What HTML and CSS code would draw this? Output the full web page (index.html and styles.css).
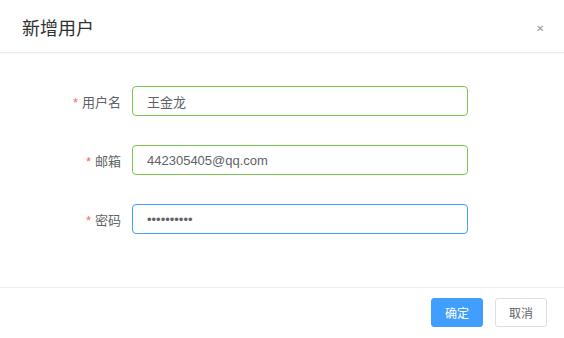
FILE: index.html
```html
<!DOCTYPE html>
<html lang="zh-CN">
<head>
    <meta charset="UTF-8">
    <meta name="viewport" content="width=device-width, initial-scale=1.0">
    <title>新增用户</title>
    <link rel="stylesheet" href="styles.css">
</head>
<body>
    <div class="dialog">
        <!-- En-tête -->
        <div class="dialog-header">
            <span class="dialog-title">新增用户</span>
            <span class="dialog-close">&#x2715;</span>
        </div>

        <!-- Formulaire -->
        <div class="dialog-body">
            <div class="form-row">
                <label class="form-label"><span class="req">*</span>用户名</label>
                <input class="form-input ok" type="text" value="王金龙">
            </div>
            <div class="form-row">
                <label class="form-label"><span class="req">*</span>邮箱</label>
                <input class="form-input ok" type="text" value="442305405@qq.com">
            </div>
            <div class="form-row">
                <label class="form-label"><span class="req">*</span>密码</label>
                <input class="form-input focus" type="password" value="1234567890">
            </div>
        </div>

        <!-- Boutons -->
        <div class="dialog-footer">
            <button class="btn btn-primary">确定</button>
            <button class="btn">取消</button>
        </div>
    </div>
</body>
</html>
```

FILE: styles.css
```css
body {
    margin: 0;
    padding: 0;
    background-color: #fff;
    font-family: "Liberation Sans", "Noto Sans CJK SC", sans-serif;
    color: #606266;
}
.dialog {
    width: 564px;
    height: 338px;
    background: #fff;
}
.dialog-header {
    height: 52px;
    padding: 0 22px;
    display: flex;
    align-items: center;
    justify-content: space-between;
    border-bottom: 1px solid #ebeef5;
    box-shadow: 0 1px 2px rgba(0, 0, 0, 0.03);
}
.dialog-title {
    font-size: 18px;
    color: #303133;
    margin-top: 2px;
}
.dialog-close {
    font-size: 10px;
    color: #909399;
    margin-right: -2px;
    margin-top: 4px;
}
.dialog-body {
    padding: 33px 0 53px;
    display: flex;
    flex-direction: column;
    gap: 29px;
    border-bottom: 1px solid #ebeef5;
}
.form-row {
    display: flex;
    align-items: center;
    height: 30px;
}
.form-label {
    width: 132px;
    padding-right: 11px;
    box-sizing: border-box;
    text-align: right;
    font-size: 13px;
    color: #606266;
}
.req {
    color: #f56c6c;
    margin-right: 4px;
}
.form-input {
    width: 336px;
    height: 30px;
    box-sizing: border-box;
    padding: 0 14px;
    border: 1px solid #dcdfe6;
    border-radius: 4px;
    font-family: "Liberation Sans", "Noto Sans CJK SC", sans-serif;
    font-size: 13px;
    color: #606266;
    outline: none;
}
.form-input.ok {
    border-color: #7ac74f;
}
.form-input.focus {
    border-color: #409eff;
}
.dialog-footer {
    display: flex;
    justify-content: flex-end;
    gap: 12px;
    padding: 10px 17px 0;
}
.btn {
    width: 52px;
    height: 29px;
    border: 1px solid #dcdfe6;
    border-radius: 3px;
    background: #fff;
    color: #606266;
    font-family: "Liberation Sans", "Noto Sans CJK SC", sans-serif;
    font-size: 12px;
    padding: 0;
    cursor: pointer;
}
.btn-primary {
    background-color: #409eff;
    border-color: #409eff;
    color: #fff;
}
```
